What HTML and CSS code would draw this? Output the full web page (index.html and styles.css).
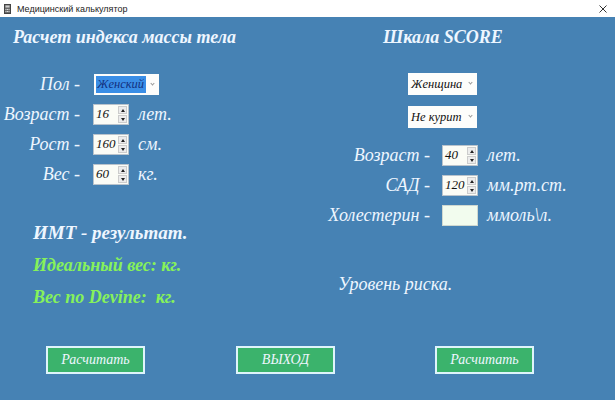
FILE: index.html
```html
<!DOCTYPE html>
<html lang="ru">
<head>
<meta charset="utf-8">
<title>Медицинский калькулятор</title>
<link rel="stylesheet" href="styles.css">
</head>
<body>
<div class="window">
  <div class="titlebar">
    <svg class="app-icon" width="7" height="10" viewBox="0 0 7 10"><rect x="0.5" y="0.5" width="6" height="9" fill="#6b6b6b" stroke="#444"/><rect x="1.5" y="1.5" width="4" height="2" fill="#cfcfcf"/><g fill="#dcdcdc"><rect x="1.5" y="5" width="1" height="1"/><rect x="3" y="5" width="1" height="1"/><rect x="4.5" y="5" width="1" height="1"/><rect x="1.5" y="7" width="1" height="1"/><rect x="3" y="7" width="1" height="1"/><rect x="4.5" y="7" width="1" height="1"/></g></svg>
    <span class="win-title">Медицинский калькулятор</span>
    <svg class="close" width="8" height="8" viewBox="0 0 8 8"><path d="M0.5 0.5L7.5 7.5M7.5 0.5L0.5 7.5" stroke="#333" stroke-width="1"/></svg>
  </div>
  <div class="client">
    <div class="panels">
      <section class="panel left">
        <h1 class="heading">Расчет индекса массы тела</h1>
        <div class="form">
          <span class="label">Пол -</span>
          <div class="combo small"><span class="combo-text selected">Женский</span><span class="chev"></span></div>
          <span></span>

          <span class="label">Возраст -</span>
          <div class="spin"><span class="spin-val">16</span><span class="spin-btns"><i class="up"></i><i class="down"></i></span></div>
          <span class="unit">лет.</span>

          <span class="label">Рост -</span>
          <div class="spin"><span class="spin-val">160</span><span class="spin-btns"><i class="up"></i><i class="down"></i></span></div>
          <span class="unit">см.</span>

          <span class="label">Вес -</span>
          <div class="spin"><span class="spin-val">60</span><span class="spin-btns"><i class="up"></i><i class="down"></i></span></div>
          <span class="unit">кг.</span>
        </div>
        <div class="results">
          <p class="res white">ИМТ - результат.</p>
          <p class="res green">Идеальный вес: кг.</p>
          <p class="res green">Вес по Devine:&nbsp; кг.</p>
        </div>
      </section>
      <section class="panel right">
        <h1 class="heading score">Шкала SCORE</h1>
        <div class="combos">
          <div class="combo wide"><span class="combo-text">Женщина</span><span class="chev"></span></div>
          <div class="combo wide"><span class="combo-text">Не курит</span><span class="chev"></span></div>
        </div>
        <div class="form form-right">
          <span class="label">Возраст -</span>
          <div class="spin"><span class="spin-val">40</span><span class="spin-btns"><i class="up"></i><i class="down"></i></span></div>
          <span class="unit">лет.</span>

          <span class="label">САД -</span>
          <div class="spin"><span class="spin-val">120</span><span class="spin-btns"><i class="up"></i><i class="down"></i></span></div>
          <span class="unit">мм.рт.ст.</span>

          <span class="label">Холестерин -</span>
          <div class="field"></div>
          <span class="unit">ммоль\л.</span>
        </div>
        <p class="risk">Уровень риска.</p>
      </section>
    </div>
    <div class="buttons">
      <button class="btn">Расчитать</button>
      <button class="btn">ВЫХОД</button>
      <button class="btn last">Расчитать</button>
    </div>
  </div>
</div>
</body>
</html>
```

FILE: styles.css
```css
* { box-sizing: border-box; }
html, body { margin: 0; padding: 0; }
body {
  width: 615px;
  height: 400px;
  overflow: hidden;
  font-family: "Liberation Serif", "DejaVu Serif", serif;
  background: #4682b4;
}
.window {
  width: 615px;
  height: 400px;
  display: flex;
  flex-direction: column;
}
.titlebar {
  height: 17px;
  background: #ffffff;
  display: flex;
  align-items: center;
  padding-left: 4px;
  font-family: "Liberation Sans", "DejaVu Sans", sans-serif;
  font-size: 9px;
  color: #222;
}
.app-icon { margin-right: 6px; }
.win-title { flex: 1; }
.close { margin-right: 8px; }

.client {
  flex: 1;
  background: #4682b4;
  padding-top: 7px;
  color: #eef6ff;
  font-style: italic;
}
.panels {
  display: grid;
  grid-template-columns: 307px 1fr;
  height: 322px;
}
.heading {
  margin: 0;
  height: 26px;
  line-height: 26px;
  font-size: 18px;
  font-weight: bold;
  font-style: italic;
  color: #eef6ff;
  white-space: nowrap;
}
.left .heading { margin-left: 13px; }
.score { margin-left: 76px; }

.form {
  display: grid;
  grid-template-columns: 80px 49px auto;
  grid-auto-rows: 30px;
  align-items: center;
  margin-top: 19px;
}
.form > .label {
  text-align: right;
  font-size: 18px;
  white-space: nowrap;
}
.form > .spin, .form > .field { margin-left: 13px; }
.form > .unit { margin-left: 9px; font-size: 18px; white-space: nowrap; }

.combo {
  height: 21px;
  background: #fdfdfb;
  display: flex;
  align-items: center;
  padding-left: 2px;
  position: relative;
  color: #111;
  font-size: 12.5px;
}
.combo.small { width: 65px; margin-left: 14px; }
.combo.wide { width: 69px; height: 22px; padding-left: 2px; }
.combo-text { line-height: 17px; padding: 0 2px 0 1px; }
.combo-text.selected { background: #3a8ee6; color: #13317f; }
.chev {
  position: absolute;
  right: 5px;
  top: 8px;
  width: 3px;
  height: 3px;
  border-right: 1px solid #999;
  border-bottom: 1px solid #999;
  transform: rotate(45deg);
}

.spin {
  width: 36px;
  height: 21px;
  background: #fbfcf6;
  border: 1px solid #b9c3cc;
  display: flex;
  align-items: center;
  color: #111;
  font-size: 13px;
}
.spin-val { flex: 1; padding-left: 2px; white-space: nowrap; }
.spin-btns {
  width: 9px;
  height: 17px;
  margin-right: 1px;
  display: flex;
  flex-direction: column;
  gap: 1px;
}
.spin-btns i {
  flex: 1;
  background: #ececec;
  border: 1px solid #cccccc;
  position: relative;
}
.spin-btns i::after {
  content: "";
  position: absolute;
  left: 1.5px;
  top: 2px;
  border-left: 2px solid transparent;
  border-right: 2px solid transparent;
}
.spin-btns .up::after { border-bottom: 3px solid #222; }
.spin-btns .down::after { border-top: 3px solid #222; }

.results { margin-top: 28px; margin-left: 33px; }
.res {
  margin: 0;
  height: 32px;
  line-height: 32px;
  font-weight: bold;
  white-space: nowrap;
}
.res.white { font-size: 19px; color: #eef6ff; }
.res.green { font-size: 18px; color: #86f25a; }

.combos {
  margin-left: 101px;
  margin-top: 23px;
  display: flex;
  flex-direction: column;
  gap: 11px;
}
.form-right {
  margin-top: 12px;
  grid-template-columns: 123px 48px auto;
}
.form-right > .spin, .form-right > .field { margin-left: 12px; }
.field {
  width: 36px;
  height: 21px;
  background: #f2fcee;
  border: 1px solid #cfd8d0;
}
.risk {
  margin: 0;
  margin-top: 39px;
  margin-left: 31px;
  font-size: 18px;
  line-height: 30px;
}

.buttons {
  display: flex;
  padding-left: 46px;
  gap: 91px;
}
.btn {
  width: 99px;
  height: 28px;
  background: #3bb36c;
  border: 2px solid #dff4fb;
  color: #eef6ff;
  font-family: "Liberation Serif", "DejaVu Serif", serif;
  font-style: italic;
  font-size: 14px;
  padding: 0;
}
.btn.last { margin-left: 9px; }
```
